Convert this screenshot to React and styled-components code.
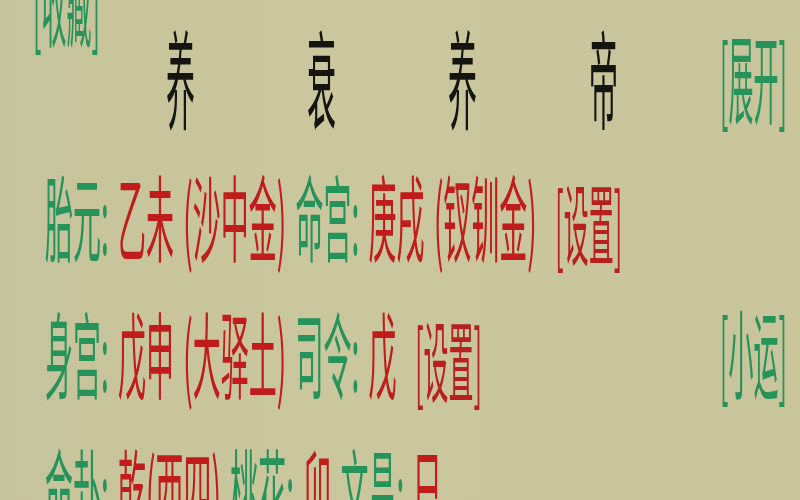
import React from 'react';
import styled, { createGlobalStyle } from 'styled-components';

const GlobalStyle = createGlobalStyle`
  html, body {
    margin: 0;
    padding: 0;
    background: #c9c59d;
    overflow: hidden;
  }
`;

const Page = styled.div`
  width: 800px;
  height: 500px;
  overflow: hidden;
  background: linear-gradient(90deg, #c6c49c 0%, #cac69d 40%, #c8c49b 100%);
  font-family: "Noto Sans CJK SC", "Noto Sans", sans-serif;
`;

// the screenshot is stretched vertically; lay out at natural size and stretch
const Stretch = styled.div`
  width: 800px;
  transform: scaleY(3.35);
  transform-origin: top left;
  padding-top: 2px;
  box-sizing: border-box;
`;

const StateRow = styled.div`
  display: grid;
  grid-template-columns: 110px repeat(4, 141px) 1fr;
  height: 41px;
  align-items: center;
`;

const StateCell = styled.div`
  font-size: 29px;
  color: #141410;
  line-height: 41px;
  text-align: center;
  transform: scaleY(1.1);
`;

const Link = styled.span`
  display: inline-block;
  color: ${p => (p.red ? '#b8201f' : '#25935a')};
  font-size: 25px;
  line-height: 41px;
  white-space: pre;
  word-spacing: 0;
  transform: ${p => (p.red ? 'translateY(2.4px) scaleY(1.05)' : 'scaleY(1.15)')};
`;

const CornerLink = styled(Link)`
  align-self: start;
  margin-top: -23px;
  padding-left: 33px;
`;

const EndLink = styled(Link)`
  justify-self: end;
  padding-right: 13px;
`;

const InfoRow = styled.div`
  display: flex;
  align-items: center;
  height: 41px;
  padding-left: 45px;
  padding-right: 13px;
  font-size: 28px;
  white-space: pre;
  word-spacing: 3px;
`;

const Label = styled.span`
  color: #25935a;
`;

const Value = styled.span`
  color: #c01c1c;
`;

const Spacer = styled.div`
  flex: 1;
`;

const states = ['养', '衰', '养', '帝'];

export default function App() {
  return (
    <Page>
      <GlobalStyle />
      <Stretch>
        <StateRow>
          <CornerLink>[收藏]</CornerLink>
          {states.map((s, i) => (
            <StateCell key={i}>{s}</StateCell>
          ))}
          <EndLink>[展开]</EndLink>
        </StateRow>
        <InfoRow>
          <Label>胎元: </Label>
          <Value>乙未 (沙中金) </Value>
          <Label>命宫: </Label>
          <Value>庚戌 (钗钏金)  </Value>
          <Link red>[设置]</Link>
        </InfoRow>
        <InfoRow>
          <Label>身宫: </Label>
          <Value>戊申 (大驿土) </Value>
          <Label>司令: </Label>
          <Value>戊  </Value>
          <Link red>[设置]</Link>
          <Spacer />
          <Link>[小运]</Link>
        </InfoRow>
        <InfoRow>
          <Label>命卦: </Label>
          <Value>乾(西四) </Value>
          <Label>桃花: </Label>
          <Value>卯 </Value>
          <Label>文昌: </Label>
          <Value>巳</Value>
        </InfoRow>
      </Stretch>
    </Page>
  );
}
